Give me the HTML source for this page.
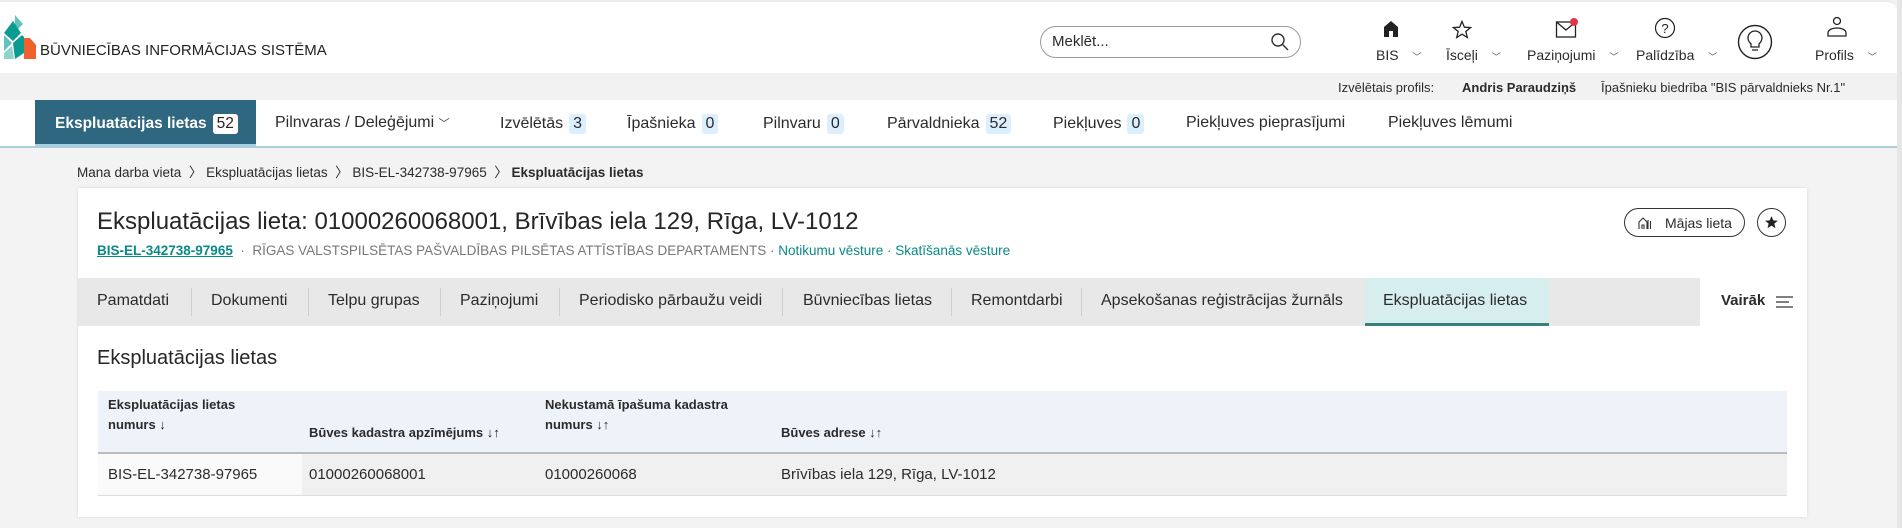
<!DOCTYPE html>
<html><head><meta charset="utf-8"><style>
*{box-sizing:border-box;margin:0;padding:0}
body{width:1902px;height:528px;overflow:hidden;background:#f3f3f3;font-family:"Liberation Sans",sans-serif;color:#2b2b2b;position:relative}
.a{position:absolute;white-space:nowrap}
.hdr{position:absolute;left:0;top:0;width:1897px;height:73px;background:#fff;border-top:2px solid #ececec;border-radius:0 10px 0 0}
.prof{position:absolute;left:0;top:73px;width:1897px;height:27px;background:#f2f2f2;font-size:13px}
.nav{position:absolute;left:0;top:100px;width:1897px;height:48px;background:#fff;border-bottom:2px solid #a9cfe0;font-size:16px}
.nav .a{top:14px}
.badge{display:inline-block;background:#dcefff;border-radius:3px;padding:1px 4px;margin-left:6px}
.card{position:absolute;left:78px;top:188px;width:1729px;height:329px;background:#fff;box-shadow:0 0 3px rgba(0,0,0,.12)}
.tabs{position:absolute;left:0;top:90px;width:1729px;height:48px;background:#e8e8e8;font-size:16px}
.tabs .a{top:14px}
.div{position:absolute;top:10px;width:1px;height:28px;background:#cfcfcf}
.th{position:absolute;font-size:13px;font-weight:bold;line-height:20px;white-space:nowrap}
.td{position:absolute;font-size:15px;top:278px;white-space:nowrap}
</style></head><body>
<div class="hdr">
<svg class="a" style="left:2px;top:13px" width="36" height="45" viewBox="0 0 36 45">
<polygon points="13,0 21,9 13,17" fill="#63c2bd"/>
<polygon points="11,6 19,18 11,26 2,18" fill="#0a9b91"/>
<polygon points="2,20 10,28 2,36" fill="#63c2bd"/>
<polygon points="11,28 20,20 22,22 22,38 13,44" fill="#0a9b91"/>
<polygon points="2,38 10,31 12,44 2,44" fill="#8fd3cf"/>
<polygon points="22,23 28,23 34,30 34,44 22,44" fill="#f0622d"/>
</svg>
<div class="a" style="left:40px;top:40px;font-size:15px;color:#222">BŪVNIECĪBAS INFORMĀCIJAS SISTĒMA</div>
<div class="a" style="left:1040px;top:24px;width:261px;height:32px;border:1px solid #9a9a9a;border-radius:16px"></div>
<div class="a" style="left:1052px;top:31px;font-size:15px">Meklēt...</div>
<svg class="a" style="left:1270px;top:30px" width="20" height="20" viewBox="0 0 20 20"><circle cx="8" cy="8" r="6" fill="none" stroke="#333" stroke-width="1.4"/><line x1="12.5" y1="12.5" x2="18" y2="18" stroke="#333" stroke-width="1.4"/></svg>
<svg class="a" style="left:1382px;top:18px" width="18" height="18" viewBox="0 0 18 18"><path d="M2 17V7L9 1l7 6v10h-5v-6H7v6z" fill="#222"/></svg>
<svg class="a" style="left:1452px;top:18px" width="20" height="20" viewBox="0 0 20 20"><polygon points="10,1.5 12.4,7.2 18.5,7.6 13.8,11.5 15.3,17.5 10,14.2 4.7,17.5 6.2,11.5 1.5,7.6 7.6,7.2" fill="none" stroke="#222" stroke-width="1.3"/></svg>
<svg class="a" style="left:1555px;top:15px" width="24" height="22" viewBox="0 0 24 22"><rect x="1.5" y="5" width="19" height="15" fill="none" stroke="#222" stroke-width="1.3"/><path d="M1.5 5l9.5 8 9.5-8" fill="none" stroke="#222" stroke-width="1.3"/><circle cx="19" cy="5" r="4" fill="#e0344a"/></svg>
<svg class="a" style="left:1654px;top:15px" width="22" height="22" viewBox="0 0 22 22"><circle cx="11" cy="11" r="9.5" fill="none" stroke="#222" stroke-width="1.2"/><text x="11" y="16" font-size="13" text-anchor="middle" font-family="Liberation Sans" fill="#222">?</text></svg>
<svg class="a" style="left:1737px;top:22px" width="36" height="36" viewBox="0 0 36 36"><circle cx="18" cy="18" r="16.5" fill="none" stroke="#222" stroke-width="1.4"/><path d="M14 20c-2-2-3-3.5-3-6a7 7 0 0114 0c0 2.5-1 4-3 6v3h-8z M15 26h6" fill="none" stroke="#222" stroke-width="1.3"/></svg>
<svg class="a" style="left:1825px;top:14px" width="24" height="22" viewBox="0 0 24 22"><circle cx="12" cy="5" r="3.5" fill="none" stroke="#222" stroke-width="1.3"/><path d="M3 20v-3c0-3 4-5 9-5s9 2 9 5v3z" fill="none" stroke="#222" stroke-width="1.3"/></svg>
<div class="a" style="left:1376px;top:45px;font-size:14px">BIS <span style="font-size:9px;margin-left:10px;color:#555">﹀</span></div>
<div class="a" style="left:1446px;top:45px;font-size:14px">Īsceļi <span style="font-size:9px;margin-left:10px;color:#555">﹀</span></div>
<div class="a" style="left:1527px;top:45px;font-size:14px">Paziņojumi <span style="font-size:9px;margin-left:10px;color:#555">﹀</span></div>
<div class="a" style="left:1636px;top:45px;font-size:14px">Palīdzība <span style="font-size:9px;margin-left:10px;color:#555">﹀</span></div>
<div class="a" style="left:1815px;top:45px;font-size:14px">Profils <span style="font-size:9px;margin-left:10px;color:#555">﹀</span></div>
</div>
<div class="prof">
<div class="a" style="left:1338px;top:7px">Izvēlētais profils:</div>
<div class="a" style="left:1462px;top:7px;font-weight:bold">Andris Paraudziņš</div>
<div class="a" style="left:1601px;top:7px">Īpašnieku biedrība "BIS pārvaldnieks Nr.1"</div>
</div>
<div class="nav">
<div class="a" style="left:35px;top:0;width:221px;height:44px;background:#2f6680"></div>
<div class="a" style="left:35px;top:44px;width:221px;height:4px;background:#a9cfe0"></div>
<div class="a" style="left:55px;color:#fff;font-weight:bold;font-size:15.5px">Ekspluatācijas lietas<span class="badge" style="background:#fff;color:#222;font-weight:normal">52</span></div>
<div class="a" style="left:275px">Pilnvaras / Deleģējumi <span style="font-size:11px;color:#444">﹀</span></div>
<div class="a" style="left:500px">Izvēlētās<span class="badge">3</span></div>
<div class="a" style="left:627px">Īpašnieka<span class="badge">0</span></div>
<div class="a" style="left:763px">Pilnvaru<span class="badge">0</span></div>
<div class="a" style="left:887px">Pārvaldnieka<span class="badge">52</span></div>
<div class="a" style="left:1053px">Piekļuves<span class="badge">0</span></div>
<div class="a" style="left:1186px">Piekļuves pieprasījumi</div>
<div class="a" style="left:1388px">Piekļuves lēmumi</div>
</div>
<div class="a" style="left:77px;top:161px;font-size:13.5px">Mana darba vieta &nbsp;〉 Ekspluatācijas lietas &nbsp;〉 BIS-EL-342738-97965 &nbsp;〉 <b>Ekspluatācijas lietas</b></div>
<div class="card">
<div class="a" style="left:19px;top:20px;font-size:24px;color:#262626">Ekspluatācijas lieta: 01000260068001, Brīvības iela 129, Rīga, LV-1012</div>
<div class="a" style="left:19px;top:55px;font-size:13.5px;color:#777"><b style="color:#0a8a86;text-decoration:underline">BIS-EL-342738-97965</b> &nbsp;· &nbsp;RĪGAS VALSTSPILSĒTAS PAŠVALDĪBAS PILSĒTAS ATTĪSTĪBAS DEPARTAMENTS · <span style="color:#0a8a86">Notikumu vēsture</span> · <span style="color:#0a8a86">Skatīšanās vēsture</span></div>
<div class="a" style="left:1546px;top:20px;width:121px;height:29px;border:1px solid #333;border-radius:15px;font-size:14px;padding:6px 0 0 40px">Mājas lieta</div>
<svg class="a" style="left:1560px;top:28px" width="14" height="14" viewBox="0 0 14 14"><path d="M1 13V6l4-4 4 4v7M4 13V9h2v4M10 4v9M12.5 5v8" fill="none" stroke="#333" stroke-width="1.1"/></svg>
<div class="a" style="left:1679px;top:20px;width:29px;height:29px;border:1px solid #333;border-radius:50%"></div>
<svg class="a" style="left:1686px;top:27px" width="15" height="15" viewBox="0 0 20 20"><polygon points="10,1.5 12.4,7.2 18.5,7.6 13.8,11.5 15.3,17.5 10,14.2 4.7,17.5 6.2,11.5 1.5,7.6 7.6,7.2" fill="#222"/></svg>
<div class="tabs">
<div class="a" style="left:19px">Pamatdati</div><div class="div" style="left:113px"></div>
<div class="a" style="left:133px">Dokumenti</div><div class="div" style="left:230px"></div>
<div class="a" style="left:250px">Telpu grupas</div><div class="div" style="left:362px"></div>
<div class="a" style="left:382px">Paziņojumi</div><div class="div" style="left:481px"></div>
<div class="a" style="left:501px">Periodisko pārbaužu veidi</div><div class="div" style="left:704px"></div>
<div class="a" style="left:725px">Būvniecības lietas</div><div class="div" style="left:873px"></div>
<div class="a" style="left:893px">Remontdarbi</div><div class="div" style="left:1003px"></div>
<div class="a" style="left:1023px">Apsekošanas reģistrācijas žurnāls</div>
<div class="a" style="left:1287px;top:0;width:184px;height:48px;background:#d6eeee;border-bottom:3px solid #3a7f7f"></div>
<div class="a" style="left:1305px">Ekspluatācijas lietas</div>
<div class="a" style="left:1622px;top:0;width:107px;height:48px;background:#fff"></div>
<div class="a" style="left:1643px;font-weight:bold;font-size:15px">Vairāk</div>
<svg class="a" style="left:1698px;top:17px" width="18" height="14" viewBox="0 0 18 14"><path d="M0 2h17M0 7h13M0 12h17" stroke="#333" stroke-width="1.3"/></svg>
</div>
<div class="a" style="left:19px;top:159px;font-size:20px;color:#262626">Ekspluatācijas lietas</div>
<div class="a" style="left:20px;top:203px;width:1689px;height:63px;background:#eef3fa;border-bottom:2px solid #bbb"></div>
<div class="a" style="left:20px;top:266px;width:1689px;height:42px;background:#f0f0f0;border-bottom:1px solid #ddd"></div>
<div class="a" style="left:20px;top:266px;width:204px;height:42px;background:#fafafa;border-bottom:1px solid #ddd"></div>
<div class="th" style="left:30px;top:207px">Ekspluatācijas lietas<br>numurs ↓</div>
<div class="th" style="left:231px;top:235px">Būves kadastra apzīmējums ↓↑</div>
<div class="th" style="left:467px;top:207px">Nekustamā īpašuma kadastra<br>numurs ↓↑</div>
<div class="th" style="left:703px;top:235px">Būves adrese ↓↑</div>
<div class="td" style="left:30px">BIS-EL-342738-97965</div>
<div class="td" style="left:231px">01000260068001</div>
<div class="td" style="left:467px">01000260068</div>
<div class="td" style="left:703px">Brīvības iela 129, Rīga, LV-1012</div>
</div>
<div class="a" style="left:1897px;top:0;width:5px;height:528px;background:#e6e6e6"></div>
</body></html>
